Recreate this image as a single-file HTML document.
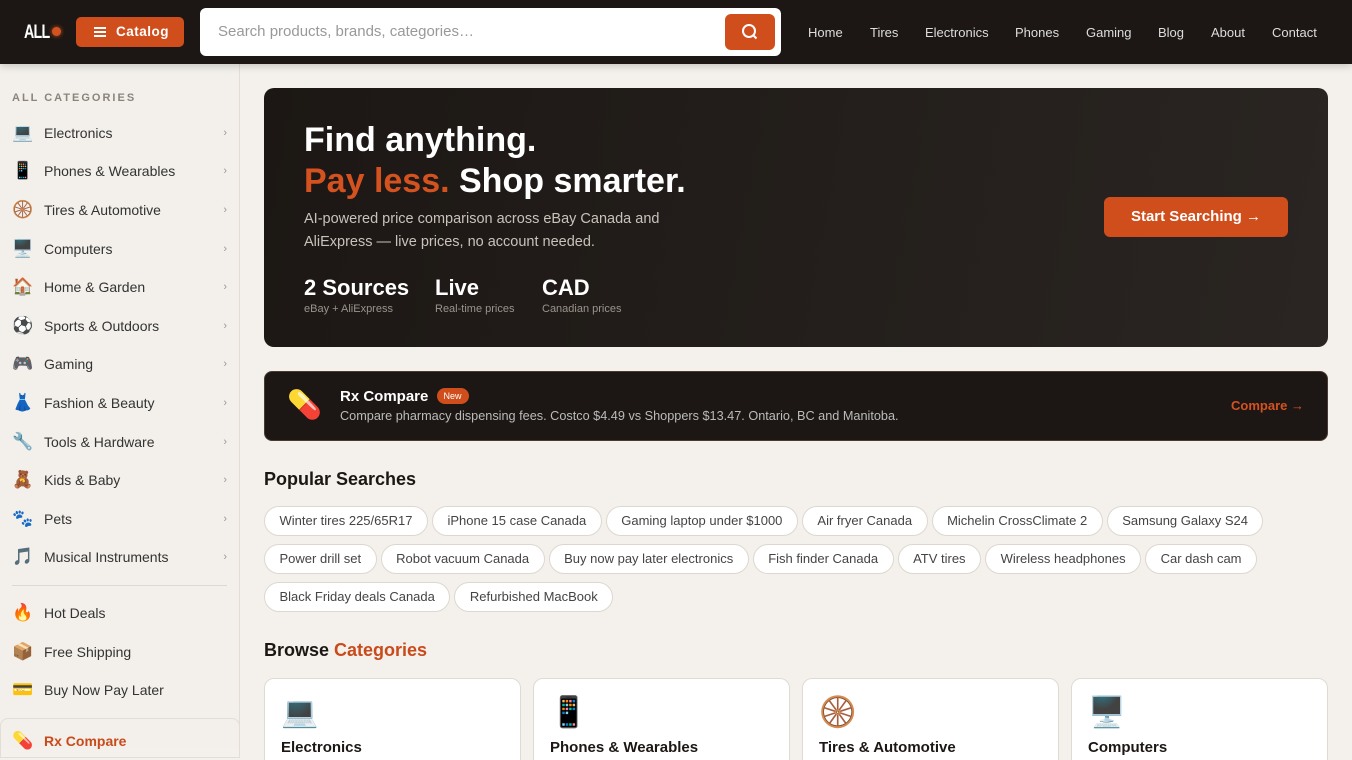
<!DOCTYPE html><html><head><meta charset="utf-8"><style>
*{box-sizing:border-box;margin:0;padding:0}
html,body{width:1352px;height:760px;overflow:hidden}
body{background:#f4f1ec;font-family:"Liberation Sans",sans-serif;color:#1c1714;position:relative}
.hdr{position:absolute;left:0;top:0;width:1352px;height:64px;background:#1c1714;box-shadow:0 2px 8px rgba(0,0,0,.2);z-index:2}
.logo{position:absolute;left:24px;top:22px;color:#fff;font-weight:bold;font-size:19px;letter-spacing:-1px;transform:scaleX(.75);transform-origin:left}
.dot{position:absolute;left:52px;top:27px;width:9px;height:9px;border-radius:50%;background:#d4521f;box-shadow:0 0 4px #d4521f}
.cat{position:absolute;left:76px;top:17px;width:108px;height:30px;background:#d04e1c;border-radius:5px;color:#fff;font-weight:bold;font-size:13.5px;line-height:30px;padding-left:40px;letter-spacing:.5px}
.cat i{position:absolute;left:18px;top:10px;width:12px;height:2px;background:#fff;box-shadow:0 4px #fff,0 8px #fff}
.search{position:absolute;left:200px;top:8px;width:581px;height:48px;background:#fff;border-radius:6px;font-size:15px;color:#999;padding:15px 18px}
.sbtn{position:absolute;right:6px;top:6px;width:50px;height:36px;background:#d04e1c;border-radius:6px}
.nav{position:absolute;top:25px;font-size:13px;color:#ddd}
.side{position:absolute;left:0;top:64px;width:240px;height:684px;border-right:1px solid #e2ddd5;background:#f3f0eb}
.sh{position:absolute;left:12px;top:28px;font-size:11px;font-weight:bold;letter-spacing:2px;color:#8a847c}
.it{position:absolute;left:12px;font-size:14px;color:#333;height:20px;line-height:20px;width:215px}
.it b{display:inline-block;width:32px;font-weight:normal;font-size:17px}
.it s{position:absolute;right:0;top:0;text-decoration:none;color:#999;font-size:11px}
.hero{position:absolute;left:264px;top:88px;width:1064px;height:259px;border-radius:10px;background:radial-gradient(circle at 1258px 60px,rgba(200,80,40,.35),transparent 110px),linear-gradient(100deg,#1c1714,#2a2522);color:#fff;overflow:hidden}
.chip{display:inline-block;height:30px;line-height:28px;border:1px solid #ddd8cf;background:#fff;border-radius:15px;padding:0 14.5px;font-size:13px;color:#444;margin:0 4px 8px 0}
.card{position:absolute;top:678px;width:257px;height:100px;background:#fff;border:1px solid #e0dbd2;border-radius:10px;padding:16px}
.card div{font-size:30px;height:44px}
.card p{font-weight:bold;font-size:15px}
</style></head><body>
<div class="hdr"><div class="logo">ALL</div><div class="dot"></div>
<div class="cat"><i></i>Catalog</div>
<div class="search">Search products, brands, categories…<div class="sbtn"><svg width="50" height="36" viewBox="0 0 50 36"><circle cx="24" cy="17" r="6" fill="none" stroke="#fff" stroke-width="2"/><path d="M28.5 21.5l3 3" stroke="#fff" stroke-width="2"/></svg></div></div>
<span class="nav" style="left:808px">Home</span><span class="nav" style="left:870px">Tires</span><span class="nav" style="left:925px">Electronics</span><span class="nav" style="left:1015px">Phones</span><span class="nav" style="left:1086px">Gaming</span><span class="nav" style="left:1158px">Blog</span><span class="nav" style="left:1211px">About</span><span class="nav" style="left:1272px">Contact</span>
</div>
<div class="side"><div class="sh">ALL CATEGORIES</div>
<div class="it" style="top:59px"><b>💻</b>Electronics<s>›</s></div>
<div class="it" style="top:97px"><b>📱</b>Phones &amp; Wearables<s>›</s></div>
<div class="it" style="top:136px"><b>🛞</b>Tires &amp; Automotive<s>›</s></div>
<div class="it" style="top:175px"><b>🖥️</b>Computers<s>›</s></div>
<div class="it" style="top:213px"><b>🏠</b>Home &amp; Garden<s>›</s></div>
<div class="it" style="top:252px"><b>⚽</b>Sports &amp; Outdoors<s>›</s></div>
<div class="it" style="top:290px"><b>🎮</b>Gaming<s>›</s></div>
<div class="it" style="top:329px"><b>👗</b>Fashion &amp; Beauty<s>›</s></div>
<div class="it" style="top:368px"><b>🔧</b>Tools &amp; Hardware<s>›</s></div>
<div class="it" style="top:406px"><b>🧸</b>Kids &amp; Baby<s>›</s></div>
<div class="it" style="top:445px"><b>🐾</b>Pets<s>›</s></div>
<div class="it" style="top:483px"><b>🎵</b>Musical Instruments<s>›</s></div>
<div style="position:absolute;left:12px;top:521px;width:215px;height:1px;background:#ddd8cf"></div>
<div class="it" style="top:539px"><b>🔥</b>Hot Deals</div>
<div class="it" style="top:578px"><b>📦</b>Free Shipping</div>
<div class="it" style="top:616px"><b>💳</b>Buy Now Pay Later</div>
<div style="position:absolute;left:0;top:654px;width:240px;height:40px;border:1px solid #e2ddd5;border-radius:8px 8px 0 0"></div>
<div class="it" style="top:667px;color:#c94a1b;font-weight:bold"><b>💊</b>Rx Compare</div>
</div>
<div class="hero">
<div style="position:absolute;left:40px;top:32px;font-size:34px;font-weight:bold;line-height:41px">Find anything.<br><span style="color:#d4521f">Pay less.</span> Shop smarter.</div>
<div style="position:absolute;left:40px;top:120px;font-size:14.5px;line-height:23px;color:#c8c2ba">AI-powered price comparison across eBay Canada and<br>AliExpress — live prices, no account needed.</div>
<div style="position:absolute;left:40px;top:187px;font-size:22px;font-weight:bold">2 Sources<div style="font-size:11px;font-weight:normal;color:#9a948c;margin-top:2px">eBay + AliExpress</div></div>
<div style="position:absolute;left:171px;top:187px;font-size:22px;font-weight:bold">Live<div style="font-size:11px;font-weight:normal;color:#9a948c;margin-top:2px">Real-time prices</div></div>
<div style="position:absolute;left:278px;top:187px;font-size:22px;font-weight:bold">CAD<div style="font-size:11px;font-weight:normal;color:#9a948c;margin-top:2px">Canadian prices</div></div>
<div style="position:absolute;left:840px;top:109px;width:184px;height:40px;background:#d04e1c;border-radius:6px;font-weight:bold;font-size:15px;line-height:40px;text-align:center">Start Searching →</div>
</div>
<div style="position:absolute;left:264px;top:371px;width:1064px;height:70px;background:#1c1714;border:1px solid #4a3a30;border-radius:8px;color:#fff">
<div style="position:absolute;left:22px;top:16px;font-size:28px">💊</div>
<div style="position:absolute;left:75px;top:16px;font-size:15px;font-weight:bold">Rx Compare <span style="display:inline-block;background:#d04e1c;border-radius:9px;font-size:9px;padding:3px 7px;margin-left:4px;vertical-align:2px;font-weight:normal">New</span></div>
<div style="position:absolute;left:75px;top:37px;font-size:12.7px;color:#bbb">Compare pharmacy dispensing fees. Costco $4.49 vs Shoppers $13.47. Ontario, BC and Manitoba.</div>
<div style="position:absolute;right:23px;top:26px;font-size:13px;font-weight:bold;color:#d4521f">Compare →</div>
</div>
<div style="position:absolute;left:264px;top:469px;font-size:18px;font-weight:bold">Popular Searches</div>
<div style="position:absolute;left:264px;top:506px;width:1070px">
<span class="chip">Winter tires 225/65R17</span><span class="chip">iPhone 15 case Canada</span><span class="chip">Gaming laptop under $1000</span><span class="chip">Air fryer Canada</span><span class="chip">Michelin CrossClimate 2</span><span class="chip">Samsung Galaxy S24</span><span class="chip">Power drill set</span><span class="chip">Robot vacuum Canada</span><span class="chip">Buy now pay later electronics</span><span class="chip">Fish finder Canada</span><span class="chip">ATV tires</span><span class="chip">Wireless headphones</span><span class="chip">Car dash cam</span><span class="chip">Black Friday deals Canada</span><span class="chip">Refurbished MacBook</span>
</div>
<div style="position:absolute;left:264px;top:640px;font-size:18px;font-weight:bold">Browse <span style="color:#c94a1b">Categories</span></div>
<div class="card" style="left:264px"><div>💻</div><p>Electronics</p></div>
<div class="card" style="left:533px"><div>📱</div><p>Phones &amp; Wearables</p></div>
<div class="card" style="left:802px"><div>🛞</div><p>Tires &amp; Automotive</p></div>
<div class="card" style="left:1071px"><div>🖥️</div><p>Computers</p></div>
</body></html>
